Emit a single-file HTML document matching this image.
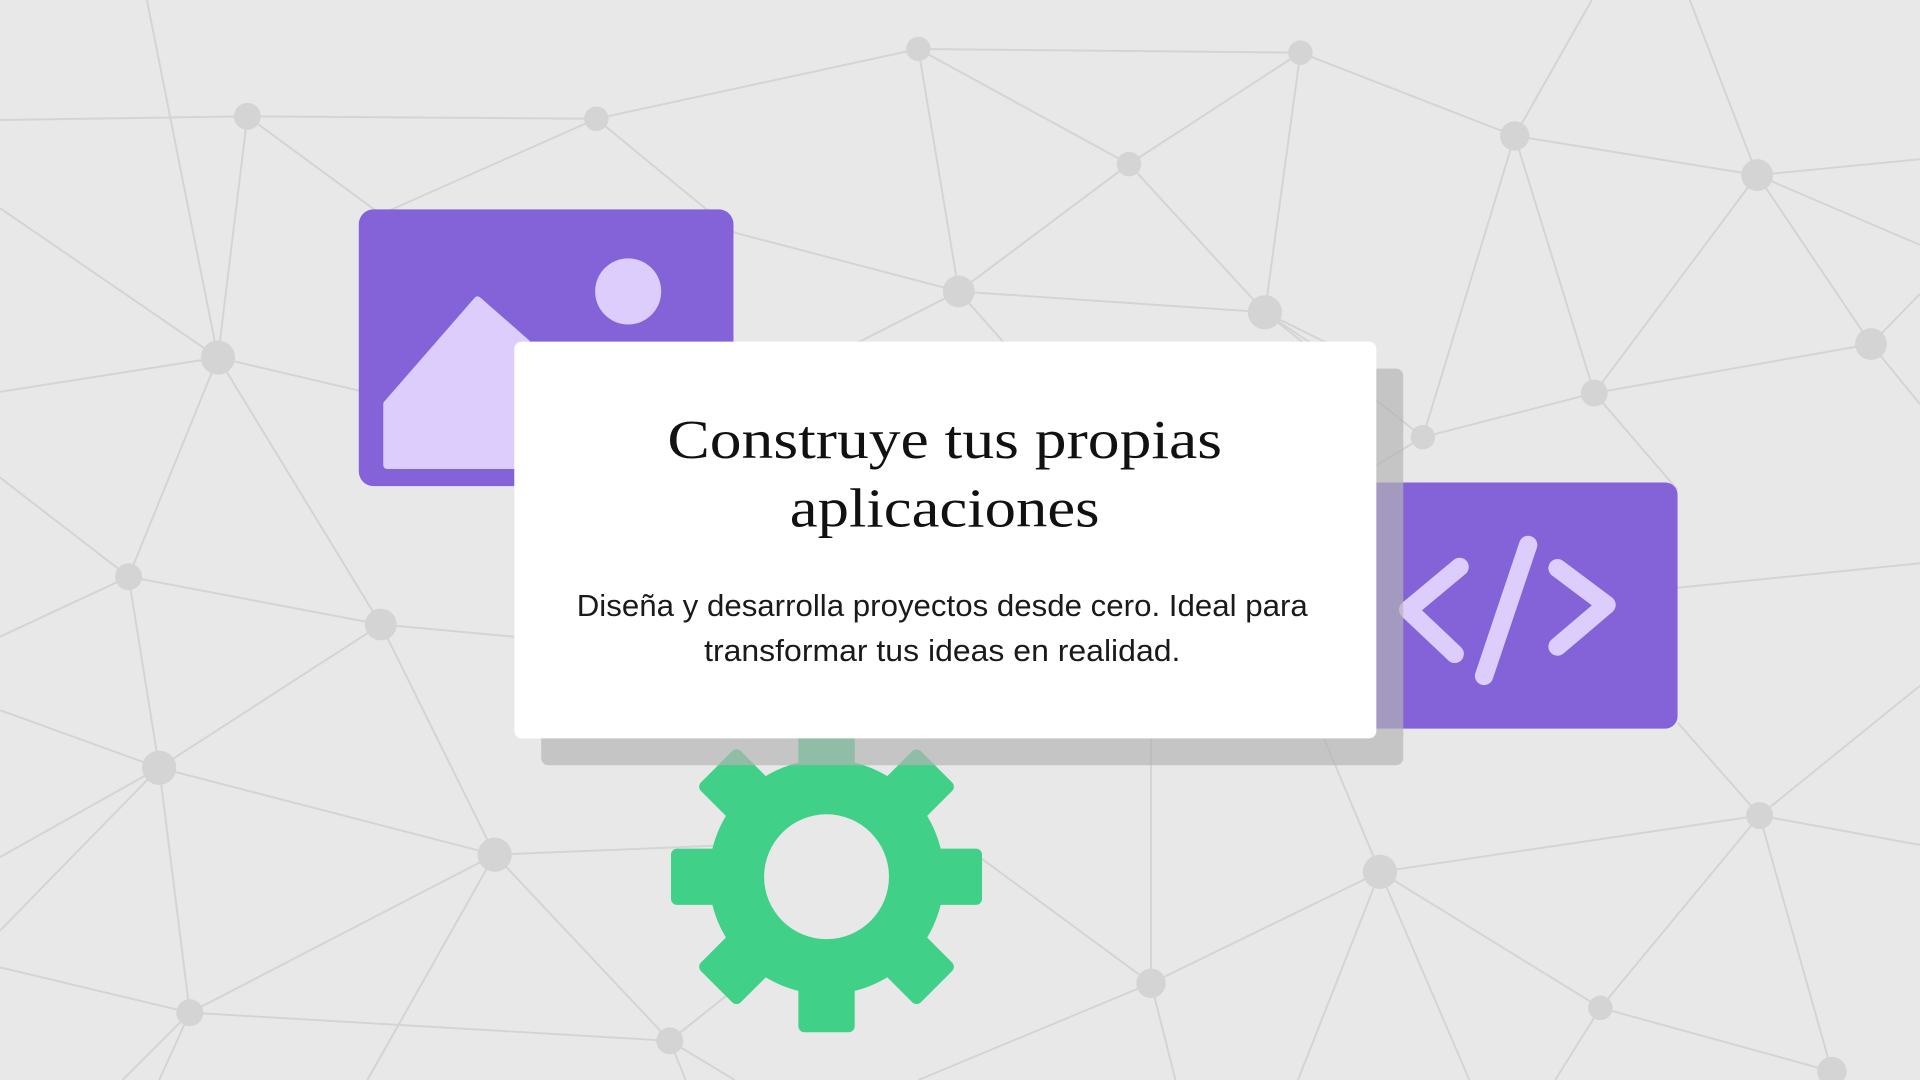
<!DOCTYPE html>
<html><head><meta charset="utf-8"><style>
html,body{margin:0;padding:0;width:1920px;height:1080px;overflow:hidden;background:#e8e8e8}
svg{display:block}
</style></head><body>
<svg width="1920" height="1080" viewBox="0 0 1568 882" xmlns="http://www.w3.org/2000/svg">
<rect width="1568" height="882" fill="#e8e8e8"/>
<g stroke="#d4d4d4" stroke-width="1.6" fill="none">
<path d="M0 98 L202 95 L487 97 L750 40 L1062 43 L1237 111 L1435 143 L1568 130"/>
<path d="M202 95 L178 292 L105 471 L130 627 L155 827 L130 882"/>
<path d="M0 170 L178 292 L311 510 L404 698 L547 850 L560 882"/>
<path d="M202 95 L311 175 M487 97 L311 175 M487 97 L600 190 L783 238 L922 134 L750 40 L783 238 L1033 255 L922 134 L1062 43 L1033 255 L1162 357 L1302 321 L1528 281 L1568 240"/>
<path d="M1237 111 L1162 357 M1237 111 L1302 321 L1435 143 L1528 281 M1435 143 L1380 0 M1237 111 L1300 0 M1435 143 L1568 200"/>
<path d="M0 320 L178 292 L340 330 M178 292 L120 0"/>
<path d="M0 390 L105 471 L311 510 L420 520 M105 471 L0 520"/>
<path d="M0 580 L130 627 L311 510 M130 627 L404 698 L600 690 M130 627 L0 760"/>
<path d="M0 790 L155 827 L404 698 M155 827 L547 850 M155 827 L100 882 M404 698 L300 882"/>
<path d="M547 850 L660 760 M547 850 L600 882"/>
<path d="M800 700 L940 803 L1127 712 L1437 666 L1568 690 M940 803 L1127 712 M940 803 L960 882 M940 803 L750 882 M940 803 L940 600"/>
<path d="M1127 712 L1307 823 L1496 875 M1127 712 L1060 882 M1127 712 L1200 882 M1127 712 L1080 600 M1437 666 L1307 823 M1437 666 L1496 875 M1437 666 L1568 560 M1307 823 L1270 882 M1437 666 L1370 590 M1528 281 L1568 330 M1302 321 L1370 400"/>
<path d="M1033 255 L1124 300 M783 238 L700 280 M783 238 L820 280 M1033 255 L1100 300 M1370 480 L1568 460"/>
<path d="M0 700 L130 627 M1162 357 L1124 380"/>
</g>
<g fill="#d4d4d4">
<circle cx="202" cy="95" r="11"/><circle cx="487" cy="97" r="10"/><circle cx="750" cy="40" r="10"/><circle cx="1062" cy="43" r="10"/><circle cx="1237" cy="111" r="12"/><circle cx="1435" cy="143" r="13"/><circle cx="1528" cy="281" r="13"/><circle cx="1302" cy="321" r="11"/><circle cx="1162" cy="357" r="10"/><circle cx="1033" cy="255" r="14"/><circle cx="922" cy="134" r="10"/><circle cx="783" cy="238" r="13"/><circle cx="178" cy="292" r="14"/><circle cx="105" cy="471" r="11"/><circle cx="311" cy="510" r="13"/><circle cx="130" cy="627" r="14"/><circle cx="404" cy="698" r="14"/><circle cx="155" cy="827" r="11"/><circle cx="547" cy="850" r="11"/><circle cx="940" cy="803" r="12"/><circle cx="1127" cy="712" r="14"/><circle cx="1437" cy="666" r="11"/><circle cx="1307" cy="823" r="10"/><circle cx="1496" cy="875" r="12"/>
</g>
<rect x="293" y="171" width="306" height="226" rx="12" fill="#8463d8"/>
<circle cx="513" cy="238" r="27" fill="#dccdfd"/>
<path d="M316 330 L390 245 L430 280 L430 380 L316 380 Z" fill="#dccdfd" stroke="#dccdfd" stroke-width="6" stroke-linejoin="round"/>
<rect x="1110" y="394" width="260" height="201" rx="10" fill="#8463d8"/>
<g stroke="#dccdfd" stroke-width="15" stroke-linecap="round" stroke-linejoin="round" fill="none">
<path d="M1192 463 L1150 498 L1188 534"/>
<path d="M1248 445 L1212 552"/>
<path d="M1272 464 L1312 494 L1272 528"/>
</g>
<g fill="#41d087" transform="translate(675 716)">
<circle r="96"/>
<g id="t"><rect x="-23" y="-127" width="46" height="60" rx="5"/><rect x="-23" y="67" width="46" height="60" rx="5"/></g>
<use href="#t" transform="rotate(45)"/><use href="#t" transform="rotate(90)"/><use href="#t" transform="rotate(135)"/>
</g>
<rect x="653" y="590" width="45" height="30" fill="#41d087"/>
<circle cx="675" cy="716" r="51" fill="#e8e8e8"/>
<rect x="442" y="301" width="704" height="324" rx="6" fill="rgba(180,180,180,0.68)"/>
<rect x="420" y="279" width="704" height="324" rx="6" fill="#fff"/>
<text x="545" y="374" textLength="453" lengthAdjust="spacingAndGlyphs" font-family="Liberation Serif, serif" font-size="45" fill="#111">Construye tus propias</text>
<text x="645" y="430" textLength="253" lengthAdjust="spacingAndGlyphs" font-family="Liberation Serif, serif" font-size="45" fill="#111">aplicaciones</text>
<text x="471" y="503" textLength="597" lengthAdjust="spacingAndGlyphs" font-family="Liberation Sans Narrow, Liberation Sans, sans-serif" font-size="25" fill="#1a1a1a">Diseña y desarrolla proyectos desde cero. Ideal para</text>
<text x="575" y="540" textLength="389" lengthAdjust="spacingAndGlyphs" font-family="Liberation Sans Narrow, Liberation Sans, sans-serif" font-size="25" fill="#1a1a1a">transformar tus ideas en realidad.</text>
</svg>
</body></html>
